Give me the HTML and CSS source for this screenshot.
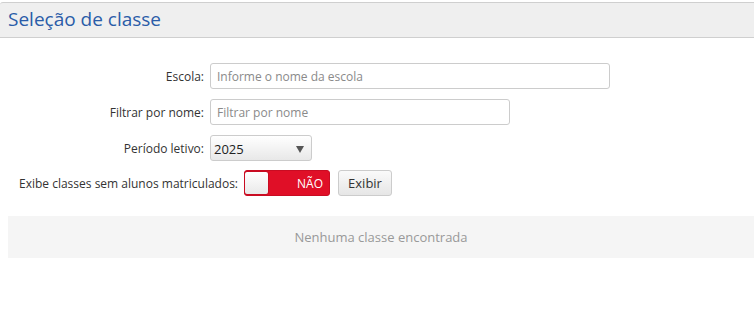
FILE: index.html
```html
<!DOCTYPE html>
<html lang="pt-BR">
<head>
<meta charset="utf-8">
<link rel="stylesheet" href="styles.css">
</head>
<body>
<div class="page-header">
  <h1 class="title">Seleção de classe</h1>
</div>
<form class="filters">
  <div class="row">
    <label class="lbl">Escola:</label>
    <input class="field field-wide" type="text" placeholder="Informe o nome da escola">
  </div>
  <div class="row">
    <label class="lbl">Filtrar por nome:</label>
    <input class="field field-mid" type="text" placeholder="Filtrar por nome">
  </div>
  <div class="row">
    <label class="lbl">Período letivo:</label>
    <div class="select"><span>2025</span><span class="caret"></span></div>
  </div>
  <div class="row row-last">
    <label class="lbl-auto">Exibe classes sem alunos matriculados:</label>
    <div class="toggle"><span class="knob"></span><span class="toggle-text">NÃO</span></div>
    <button type="button" class="btn">Exibir</button>
  </div>
</form>
<div class="empty">Nenhuma classe encontrada</div>
</body>
</html>
```
FILE: styles.css
```css
html, body { margin: 0; padding: 0; background: #fff; }
body { font-family: "Open Sans", "Liberation Sans", sans-serif; color: #333; font-size: 12px; }
.page-header {
  margin-top: 2px;
  background: #efefef;
  border-top: 1px solid #cfcfcf;
  border-bottom: 1px solid #cfcfcf;
  border-top-left-radius: 3px;
  height: 34px;
  padding-left: 8px;
}
.title {
  margin: 0;
  font-weight: 400;
  font-size: 19px;
  line-height: 32px;
  color: #2a5ca8;
}
.filters { padding-top: 25px; }
.row { display: flex; align-items: center; height: 26px; margin-bottom: 10px; }
.row-last { margin-top: -1px; }
.lbl { width: 196px; margin-left: 8px; text-align: right; padding-right: 6px; color: #333; }
.lbl-auto { margin-left: 19px; padding-right: 6px; }
.field {
  box-sizing: border-box;
  height: 26px;
  border: 1px solid #ccc;
  border-radius: 3px;
  padding: 0 6px;
  font-family: inherit;
  font-size: 12px;
  color: #333;
  margin: 0;
}
.field::placeholder { color: #8a8a8a; }
.field-wide { width: 400px; }
.field-mid { width: 300px; }
.select {
  box-sizing: border-box;
  width: 102px;
  height: 26px;
  border: 1px solid #ccc;
  border-radius: 3px;
  background: linear-gradient(#fff, #e8e8e8);
  display: flex;
  align-items: center;
  justify-content: space-between;
  padding: 2px 6px 0 3px;
  font-size: 13px;
  color: #222;
}
.caret {
  width: 0; height: 0;
  border-left: 4px solid transparent;
  border-right: 4px solid transparent;
  border-top: 7px solid #555;
  margin-right: 1px;
}
.toggle {
  box-sizing: border-box;
  width: 86px;
  height: 26px;
  background: #e00f27;
  border: 1px solid #c90c22;
  border-radius: 3px;
  display: flex;
  align-items: center;
  justify-content: space-between;
  padding-right: 6px;
}
.knob {
  box-sizing: border-box;
  width: 25px;
  height: 24px;
  background: linear-gradient(#fff, #e9e9e9);
  border-radius: 3px;
  border: 1px solid #c90c22;
  margin-left: -1px;
}
.toggle-text { color: #fff; font-size: 12px; }
.btn {
  margin-left: 8px;
  box-sizing: border-box;
  height: 26px;
  width: 54px;
  border: 1px solid #ccc;
  border-radius: 3px;
  background: linear-gradient(#fafafa, #e6e6e6);
  font-family: inherit;
  font-size: 13px;
  color: #333;
  padding: 0;
}
.empty {
  margin: 20px 0 0 8px;
  height: 42px;
  background: #f5f5f5;
  color: #999;
  font-size: 13px;
  display: flex;
  align-items: center;
  justify-content: center;
}
```
